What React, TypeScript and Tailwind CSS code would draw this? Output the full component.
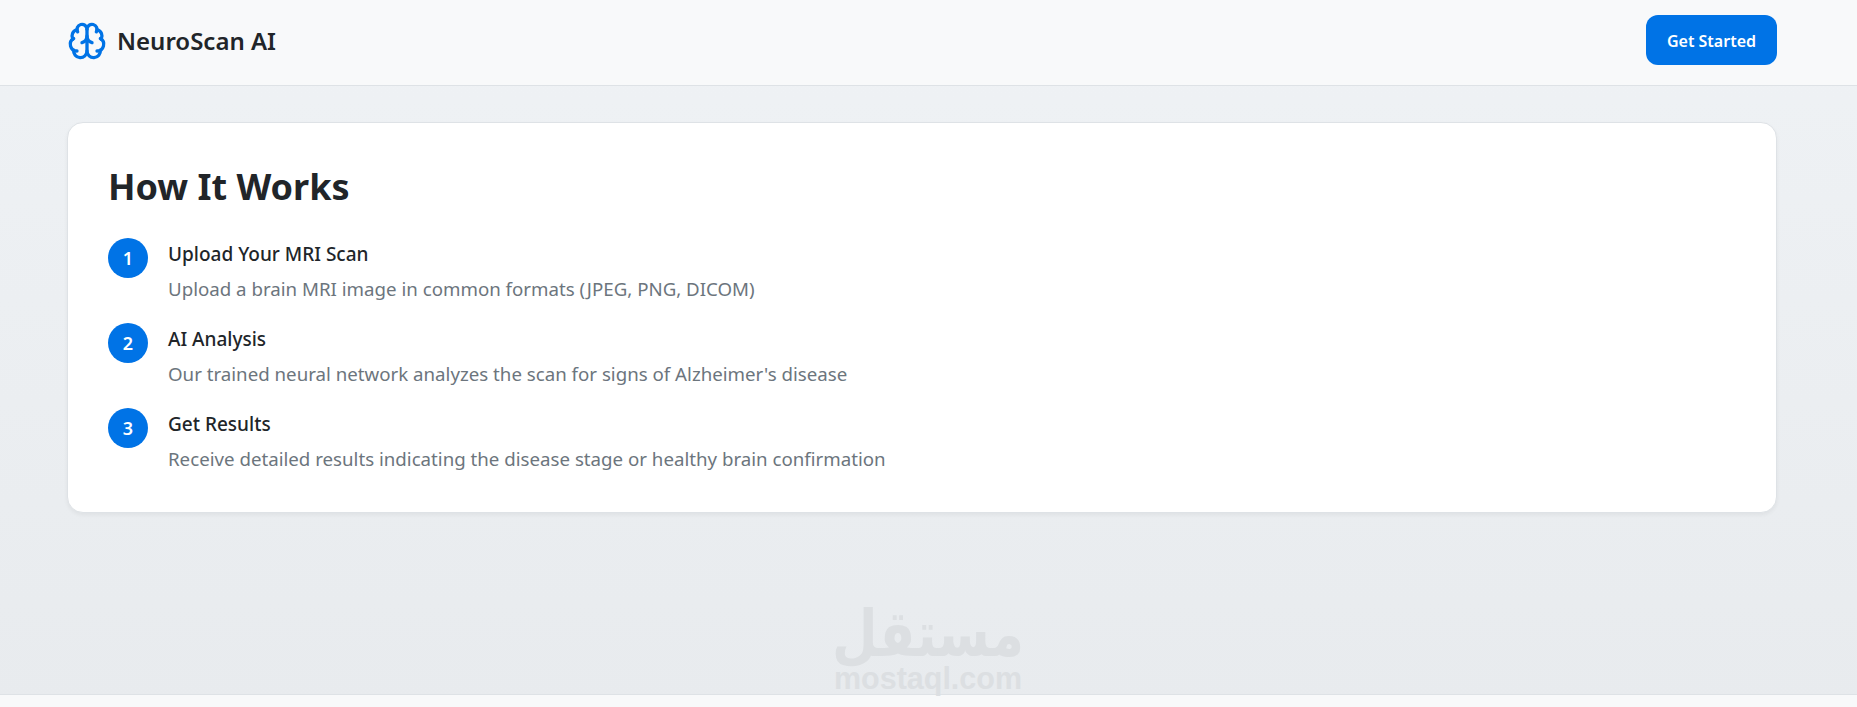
import React from 'react';
import { Brain } from 'lucide-react';

const steps = [
    { n: 1, title: 'Upload Your MRI Scan', text: 'Upload a brain MRI image in common formats (JPEG, PNG, DICOM)' },
    { n: 2, title: 'AI Analysis', text: "Our trained neural network analyzes the scan for signs of Alzheimer's disease" },
    { n: 3, title: 'Get Results', text: 'Receive detailed results indicating the disease stage or healthy brain confirmation' },
];

export default function App() {
    return (
        <div className="relative h-[707px] overflow-hidden flex flex-col bg-gradient-to-b from-[#eff2f5] to-[#e8ebee] font-['Noto_Sans',sans-serif]">
            {/* Header */}
            <header className="h-[86px] shrink-0 bg-[#f8f9fa] border-b border-[#dee2e6] pl-[67px] pr-[80px] pb-[5px] flex items-center justify-between">
                <div className="flex items-center gap-[10px] mt-[1px]">
                    <Brain size={40} strokeWidth={2} className="text-[#0073e6]" />
                    <span className="text-2xl font-semibold text-[#212529]">NeuroScan AI</span>
                </div>
                <button className="w-[131px] h-[50px] pt-[2px] rounded-xl bg-[#0073e6] text-white text-base font-semibold">Get Started</button>
            </header>

            {/* How it works */}
            <main className="flex-1 pl-[67px] pr-[80px] pt-[36px]">
                <section className="h-[391px] bg-white rounded-2xl border border-[#dee2e6] shadow-[0_2px_4px_rgba(0,0,0,0.05)] p-10">
                    <h2 className="text-[36px] leading-[48px] font-bold text-[#212529] mb-[27px]">How It Works</h2>
                    <div className="flex flex-col gap-[22px]">
                        {steps.map(s => (
                            <div key={s.n} className="flex gap-5">
                                <div className="w-10 h-10 rounded-full bg-[#0073e6] text-white text-lg font-semibold flex items-center justify-center shrink-0">{s.n}</div>
                                <div className="mt-1">
                                    <h3 className="text-[19px] leading-6 font-medium text-[#212529] mb-[11px]">{s.title}</h3>
                                    <p className="text-[18.7px] leading-6 text-[#6c757d]">{s.text}</p>
                                </div>
                            </div>
                        ))}
                    </div>
                </section>
            </main>

            <footer className="h-[13px] shrink-0 bg-[#f8f9fa] border-t border-[#dee2e6]" />

            {/* Watermark */}
            <div className="absolute left-[835px] top-[604px] w-[186px] flex flex-col items-center text-[#dcdfe2] font-bold">
                <span dir="rtl" className="text-[64px] leading-[60px] scale-x-[0.82] font-['DejaVu_Sans',sans-serif]">مستقل</span>
                <span className="text-[30.5px] leading-[28px] font-['Liberation_Sans',sans-serif]">mostaql.com</span>
            </div>
        </div>
    );
}
